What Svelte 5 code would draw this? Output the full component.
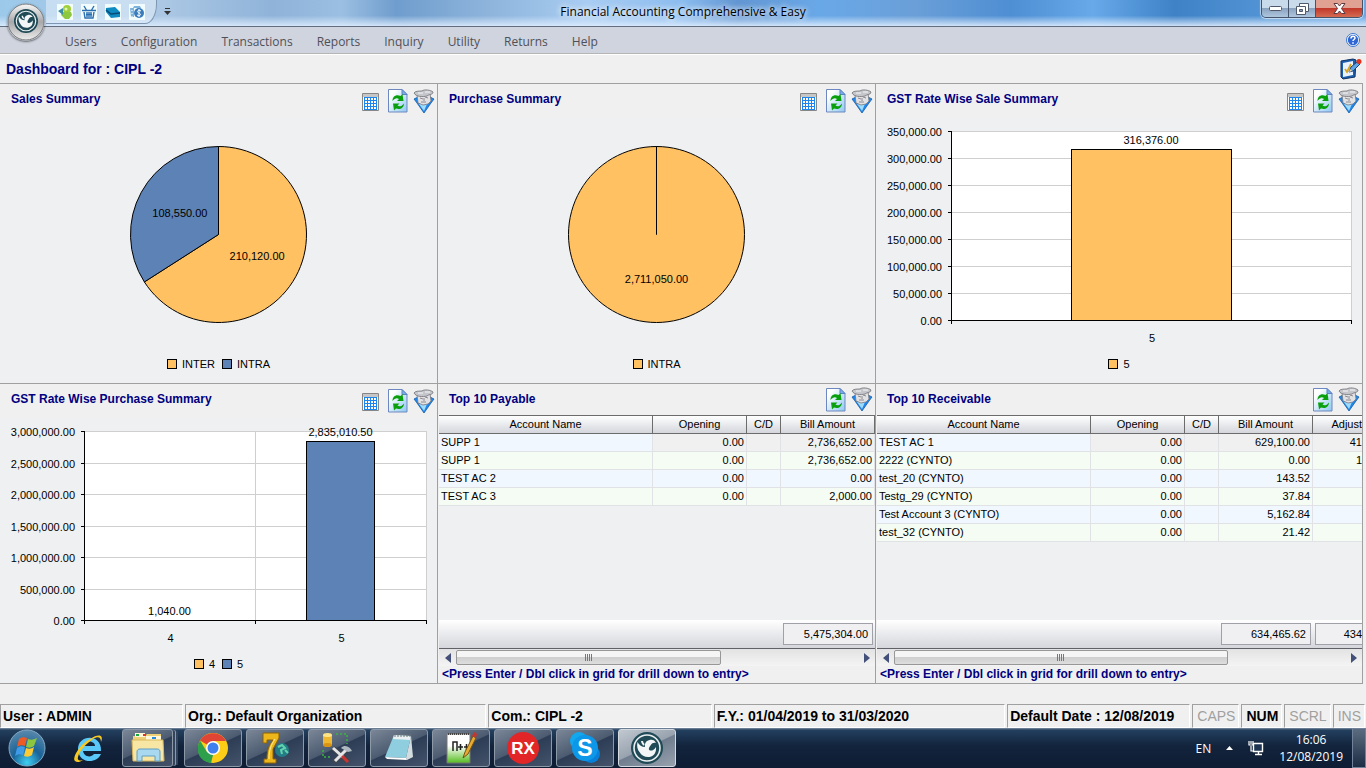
<script lang="ts">
  const menu = ['Users', 'Configuration', 'Transactions', 'Reports', 'Inquiry', 'Utility', 'Returns', 'Help'];
  const colors = ['#ffc161', '#5d82b6'];

  type Point = { name: string; value: number };
  type Bars = { title: string; width: number; left: number; max: number; step: number; data: Point[] };
  type Grid = { title: string; thumb: number; total: string; clipped?: string; rows: string[][] };

  const sales: Point[] = [{ name: 'INTER', value: 210120 }, { name: 'INTRA', value: 108550 }];
  const purchases: Point[] = [{ name: 'INTRA', value: 2711050 }];

  const saleRates: Bars = {
    title: 'GST Rate Wise Sale Summary',
    width: 486, left: 75, max: 350000, step: 50000,
    data: [{ name: '5', value: 316376 }]
  };
  const purchaseRates: Bars = {
    title: 'GST Rate Wise Purchase Summary',
    width: 437, left: 84, max: 3000000, step: 500000,
    data: [{ name: '4', value: 1040 }, { name: '5', value: 2835010.5 }]
  };

  const payable: Grid = {
    title: 'Top 10 Payable',
    thumb: 66,
    total: '5,475,304.00',
    rows: [
      ['SUPP 1', '0.00', '', '2,736,652.00'],
      ['SUPP 1', '0.00', '', '2,736,652.00'],
      ['TEST AC 2', '0.00', '', '0.00'],
      ['TEST AC 3', '0.00', '', '2,000.00']
    ]
  };
  const receivable: Grid = {
    title: 'Top 10 Receivable',
    thumb: 74,
    total: '634,465.62',
    clipped: '434',
    rows: [
      ['TEST AC 1', '0.00', '', '629,100.00', '41'],
      ['2222 (CYNTO)', '0.00', '', '0.00', '1'],
      ['test_20 (CYNTO)', '0.00', '', '143.52', ''],
      ['Testg_29 (CYNTO)', '0.00', '', '37.84', ''],
      ['Test Account 3 (CYNTO)', '0.00', '', '5,162.84', ''],
      ['test_32 (CYNTO)', '0.00', '', '21.42', '']
    ]
  };

  const status = [
    { text: 'User : ADMIN', grow: 182 },
    { text: 'Org.: Default Organization', grow: 302 },
    { text: 'Com.: CIPL -2', grow: 223 },
    { text: 'F.Y.: 01/04/2019 to 31/03/2020', grow: 292 },
    { text: 'Default Date : 12/08/2019', grow: 182 }
  ];
  const locks = [
    { text: 'CAPS', on: false },
    { text: 'NUM', on: true },
    { text: 'SCRL', on: false },
    { text: 'INS', on: false }
  ];

  const money = (n: number) =>
    n.toLocaleString('en-US', { minimumFractionDigits: 2, maximumFractionDigits: 2 });

  const top = 13;
  const bottom = 202;

  function slices(data: Point[]) {
    const sum = data.reduce((a, p) => a + p.value, 0);
    let from = 0;
    return data.map((p, i) => {
      const a = from * 2 * Math.PI;
      from += p.value / sum;
      const b = from * 2 * Math.PI;
      const mid = (a + b) / 2;
      const at = (r: number, t: number) => [218.5 + r * Math.sin(t), 116.5 - r * Math.cos(t)];
      const end = data.length === 1 ? b - 0.0001 : b;
      return {
        value: p.value,
        color: colors[i],
        d: `M218.5 116.5L${at(88, a)}A88 88 0 ${b - a > Math.PI ? 1 : 0} 1 ${at(88, end)}Z`,
        label: at(44, mid)
      };
    });
  }

  function ticks(c: Bars) {
    const out = [];
    for (let v = 0; v <= c.max; v += c.step) {
      out.push({ v, y: Math.round(bottom - (v / c.max) * (bottom - top)) + 0.5 });
    }
    return out;
  }
</script>

{#snippet swan()}
  <circle cx="20" cy="20" r="16" fill="#1f4a56" />
  <circle cx="20" cy="20" r="13" fill="none" stroke="#e9eff1" stroke-width="1.6" />
  <path d="M10.500 14c-1 4 0 8 2 10 2 4 6 5.500 10 5 5-1 7-5 6.500-10-2 3-4 4-6 3.500-2-1-1-3 .5-5 1.500-3 4-3 5.500-2.500-1-3-4-4-6.500-3-4 1-5 4-4.500 7-3 0-6-2-7.500-5z" fill="#f2f6f7" />
  <path d="M15 13c0 2 1 3 2 4" stroke="#f2f6f7" stroke-width="2" fill="none" />
{/snippet}

{#snippet gridIcon()}
  <button class="tool" aria-label="Show as grid">
    <svg width="18" height="20" viewBox="0 0 18 20">
      <path d="M.5 1.500h16v17H.5z" fill="#fff" stroke="#868686" />
      <path d="M1 2h15v3H1z" fill="#c6c6c6" />
      <path d="M2 5h13v13H2z" fill="#1c86ee" />
      {#each [6, 9, 12, 15] as y}
        {#each [3, 6, 9, 12] as x}
          <rect {x} {y} width="2" height="2" fill="#fff" />
        {/each}
      {/each}
    </svg>
  </button>
{/snippet}

{#snippet toolIcons()}
  <button class="tool" aria-label="Refresh">
    <svg width="20" height="24" viewBox="0 0 20 24">
      <defs>
        <linearGradient id="page" x1="0" y1="0" x2="1" y2="1">
          <stop offset="0.2" stop-color="#fff" />
          <stop offset="1" stop-color="#8dc8f2" />
        </linearGradient>
      </defs>
      <path d="M.5.5h13.500l5 5v17.500H.5z" fill="url(#page)" stroke="#6d88c0" />
      <path d="M14 .5v5h5z" fill="#78aee6" stroke="#5e83c4" />
      <path d="M4.500 12c0-5 4-7 8-5l2-2 1 7H9l2-2c-2-1.500-4-1-6.500 2z" fill="#0aa00d" />
      <path d="M16 14.500c0 4.500-4 6.500-8 5l-2 2-1-7h6.500l-2 2c2 1.500 4 1 6.500-2z" fill="#0aa00d" />
    </svg>
  </button>
  <button class="tool" aria-label="Filter">
    <svg width="22" height="25" viewBox="0 0 22 25">
      <path d="M1 10l4-2h12l4 2-3 4-7 10-7-10z" fill="#1e88ee" stroke="#1b5ca5" stroke-width=".8" />
      <path d="M6 15h8l-3 7z" fill="#9fdcff" />
      <path d="M4 6l13-2 1 8-3 3-5 1-5-2z" fill="#e2e2e5" stroke="#77777d" stroke-width=".8" />
      <path d="M1 4c1-2 5-2 8-2 2-2 9-1 11 1 0 3-4 2-6 4-4 1-11 1-13-3z" fill="#c4c6cb" stroke="#707076" stroke-width=".8" />
      <path d="M5 4l5 0M12 3l5 0" stroke="#f5f5f5" />
      <path d="M7 9l3 1M12 8l3 1M11 9v3M8 13h5" stroke="#8a8a90" fill="none" />
    </svg>
  </button>
{/snippet}

{#snippet heading(title: string, grid: boolean)}
  <header>
    <h2>{title}</h2>
    <div class="tools">
      {#if grid}{@render gridIcon()}{/if}
      {@render toolIcons()}
    </div>
  </header>
{/snippet}

{#snippet legend(names: string[])}
  <ul class="legend">
    {#each names as name, i}
      <li><i class="key" class:second={i === 1}></i>{name}</li>
    {/each}
  </ul>
{/snippet}

{#snippet pie(title: string, data: Point[])}
  <section class="panel">
    {@render heading(title, true)}
    <svg class="chart" viewBox="0 0 437 236" role="img" aria-label={title}>
      {#each slices(data) as s}
        <path d={s.d} fill={s.color} stroke="#000" />
      {/each}
      {#each slices(data) as s}
        <text x={s.label[0]} y={s.label[1] + 4} text-anchor="middle">{money(s.value)}</text>
      {/each}
    </svg>
    {@render legend(data.map((p) => p.name))}
  </section>
{/snippet}

{#snippet bars(c: Bars)}
  {@const right = c.width - 11}
  {@const slot = (right - c.left) / c.data.length}
  <section class="panel">
    {@render heading(c.title, true)}
    <svg class="chart" viewBox="0 0 {c.width} 236" role="img" aria-label={c.title}>
      <rect x={c.left} y={top} width={right - c.left} height={bottom - top} fill="#fff" />
      {#each ticks(c) as t}
        <path d="M{c.left} {t.y}H{right}" stroke="#cfcfcf" />
        <path d="M{c.left - 3} {t.y}h4" stroke="#000" />
        <text x={c.left - 9} y={t.y + 4} text-anchor="end">{money(t.v)}</text>
      {/each}
      {#each c.data as p, i}
        {@const x = Math.round(c.left + slot * i)}
        {@const end = Math.round(x + slot) + 0.5}
        {@const h = Math.round((p.value / c.max) * (bottom - top))}
        <path d="M{end} {top}V{bottom}" stroke="#cfcfcf" />
        <path d="M{end} {bottom}v4" stroke="#000" />
        {#if h > 0}
          <rect x={Math.round(x + slot * 0.3) + 0.5} y={bottom - h + 0.5} width={Math.round(slot * 0.4)} height={h} fill={colors[i]} stroke="#000" />
        {/if}
        <text x={x + slot / 2} y={bottom - h - 5} text-anchor="middle">{money(p.value)}</text>
        <text x={x + slot / 2 + 1} y="224" text-anchor="middle">{p.name}</text>
      {/each}
      <path d="M{c.left + 0.5} {top}V{bottom + 4}M{c.left} {bottom + 0.5}H{right + 1}" stroke="#000" />
    </svg>
    {@render legend(c.data.map((p) => p.name))}
  </section>
{/snippet}

{#snippet list(g: Grid)}
  <section class="panel list">
    {@render heading(g.title, false)}
    <div class="rows">
      <table>
        <colgroup>
          <col class="name" /><col class="opening" /><col class="cd" /><col class="amount" />
          {#if g.clipped}<col />{/if}
        </colgroup>
        <thead>
          <tr>
            <th>Account Name</th><th>Opening</th><th>C/D</th><th>Bill Amount</th>
            {#if g.clipped}<th class="cut">Adjust</th>{/if}
          </tr>
        </thead>
        <tbody>
          {#each g.rows as row}
            <tr>{#each row as cell}<td>{cell}</td>{/each}</tr>
          {/each}
        </tbody>
      </table>
    </div>
    <div class="totals">
      <output>{g.total}</output>
      {#if g.clipped}<output class="cut">{g.clipped}</output>{/if}
    </div>
    <div class="scroll">
      <button aria-label="Scroll left"><svg width="6" height="10" viewBox="0 0 6 10"><path d="M6 0v10L0 5z" fill="#43507a" /></svg></button>
      <div class="track"><div class="thumb" style="width: {g.thumb}%"></div></div>
      <button aria-label="Scroll right"><svg width="6" height="10" viewBox="0 0 6 10"><path d="M0 0v10l6-5z" fill="#43507a" /></svg></button>
    </div>
    <p class="hint">&lt;Press Enter / Dbl click in grid for drill down to entry&gt;</p>
  </section>
{/snippet}

<div class="window">
  <div class="titlebar">
    <div class="quick">
      <button aria-label="Party"><svg width="16" height="16"><rect width="16" height="16" fill="#f2fcfd" /><circle cx="10" cy="5" r="4" fill="#9fcf3a" /><path d="M5 8h9l1 3-3 4H8l-4-4z" fill="#8dc63f" /><path d="M1 7l5-3v7z" fill="#3b8fa0" /><circle cx="9" cy="5" r="1.500" fill="#e5f5b5" /></svg></button>
      <button aria-label="Basket"><svg width="16" height="16"><rect width="16" height="16" fill="#f2fcfd" /><path d="M1 6.500h14M3 8l1 6h8l1-6M3 2l3 5M13 2l-3 5M5 10.500h6M6 8v5M8 8v5M10 8v5" stroke="#2b6fb0" stroke-width="1.400" fill="none" /></svg></button>
      <button aria-label="Card"><svg width="16" height="16"><rect width="16" height="16" fill="#f2fcfd" /><path d="M1 4l9-1 5 5v5l-9 1-5-6z" fill="#0d8abf" /><path d="M1 6l5 4 9-1" stroke="#0a4a78" stroke-width="1.500" fill="none" /></svg></button>
      <button aria-label="Cash"><svg width="16" height="16"><rect width="16" height="16" fill="#f2fcfd" /><path d="M5 2h6l1 2H4zM1 4h4v9H2z" fill="#7fb3dc" /><path d="M3 6v1M3 9v1M3 12v1" stroke="#fff" /><circle cx="10" cy="9" r="5" fill="#3a7dbb" /><path d="M12 7c-3-2-5 1-2 2s1 4-2 2M10 5v8" stroke="#fff" fill="none" /></svg></button>
    </div>
    <button class="more" aria-label="Customize toolbar"><svg width="7" height="7"><path d="M1 .5h5" stroke="#333" /><path d="M0 3h7L3.500 7z" fill="#333" /></svg></button>
    <h1>Financial Accounting Comprehensive &amp; Easy</h1>
    <div class="controls">
      <button aria-label="Minimize"><svg width="13" height="6"><rect x=".5" y=".5" width="12" height="4" rx="1" fill="#fff" stroke="#50596b" /></svg></button>
      <button aria-label="Restore"><svg width="13" height="12"><path d="M3.500.5h9v8h-3v3h-9v-8h3z" fill="#fff" stroke="#50596b" /><path d="M3.500 3.500h6v5" fill="none" stroke="#50596b" /><path d="M3.500 6.500h3v2h-3z" fill="#8d9cb5" stroke="#50596b" /></svg></button>
      <button class="close" aria-label="Close"><svg width="13" height="11"><path d="M1 .5h3.500l2 2.500 2-2.500H12L8.500 5.500l3.500 5H8.500l-2-2.500-2 2.500H1l3.500-5z" fill="#fff" stroke="#5b3a40" /></svg></button>
    </div>
  </div>

  <button class="orb" aria-label="Application menu">
    <svg width="38" height="38" viewBox="0 0 38 38">
      <defs>
        <linearGradient id="metal" x1="0" y1="0" x2="0" y2="1">
          <stop offset="0" stop-color="#f8f8f8" /><stop offset=".5" stop-color="#a8a8aa" /><stop offset="1" stop-color="#ececec" />
        </linearGradient>
      </defs>
      <circle cx="19" cy="19" r="18" fill="url(#metal)" stroke="#77797d" />
      <g transform="translate(4 3) scale(.75)">{@render swan()}</g>
    </svg>
  </button>

  <nav class="menu">
    {#each menu as item}
      <a href="#{item.toLowerCase()}">{item}</a>
    {/each}
    <button class="help" aria-label="Help">
      <svg width="14" height="14" viewBox="0 0 14 14"><circle cx="7" cy="7" r="6.500" fill="#fff" stroke="#3b74cf" /><circle cx="7" cy="7" r="5.200" fill="#2e66d4" /><path d="M5 5.500c0-3 4-3 4-.5 0 1.500-2 1.500-2 3M7 9.300v1.500" stroke="#fff" stroke-width="1.500" fill="none" /></svg>
    </button>
  </nav>

  <div class="caption">
    <strong>Dashboard for : CIPL -2</strong>
    <button class="tool" aria-label="Edit dashboard">
      <svg width="22" height="22" viewBox="0 0 22 22">
        <path d="M1 3l12-2 3 1-1 17-12 2-2-2z" fill="#1d5fae" stroke="#0d3260" />
        <path d="M3 5l10-2v14L3 19z" fill="#e9f3ff" />
        <path d="M5 11l2 3 4-8" stroke="#d9a520" stroke-width="1.800" fill="none" />
        <path d="M9 14l2-5 6-5 3 2-7 7z" fill="#5fa4e4" stroke="#1b4377" />
        <path d="M9 14l1-3 2 2z" fill="#efd5a2" />
        <circle cx="19" cy="3.500" r="2.500" fill="#e03320" />
      </svg>
    </button>
  </div>

  <main>
    {@render pie('Sales Summary', sales)}
    {@render pie('Purchase Summary', purchases)}
    {@render bars(saleRates)}
    {@render bars(purchaseRates)}
    {@render list(payable)}
    {@render list(receivable)}
  </main>

  <footer class="status">
    {#each status as s}
      <span class="cell" style="flex-grow: {s.grow}">{s.text}</span>
    {/each}
    {#each locks as l}
      <span class="cell lock" class:on={l.on}>{l.text}</span>
    {/each}
  </footer>

  <div class="taskbar">
    <button class="start" aria-label="Start">
      <svg width="38" height="38" viewBox="0 0 38 38">
        <defs>
          <radialGradient id="orb" cx=".5" cy=".9" r=".9">
            <stop offset="0" stop-color="#3fd0f4" /><stop offset=".45" stop-color="#1a6398" /><stop offset="1" stop-color="#5b89ab" />
          </radialGradient>
        </defs>
        <circle cx="19" cy="19" r="18" fill="url(#orb)" stroke="#82aac6" />
        <path d="M11 10c3-2 5-2 8-1l-2 8c-3-1-5-1-8 1z" fill="#ee5a24" />
        <path d="M20 10c3 1 5 1 9-1l-3 8c-3 2-5 2-8 1z" fill="#8cc63e" />
        <path d="M9 19c3-2 5-2 8-1l-2 8c-3-1-5-1-8 1z" fill="#3f9be8" />
        <path d="M18 19c3 1 5 1 8-1l-2 8c-3 2-5 2-8 1z" fill="#fccb33" />
      </svg>
    </button>
    <button class="ie" aria-label="Internet Explorer">
      <svg width="32" height="32" viewBox="0 0 32 32">
        <path d="M29 19H11c1 6 8 7 11 3h7c-4 10-22 10-23-4C5 2 30 1 29 19zM11 14h12c0-6-11-6-12 0z" fill="#5ac8f8" />
        <path d="M29 10c3-7-2-9-11-3C7 13 0 26 3 29c2 2 5 1 8-1-4 1-6 0-5-3 1-6 9-14 15-18 5-3 8-2 8 3z" fill="#f9c922" />
      </svg>
    </button>
    <button class="app stack" aria-label="Explorer">
      <svg width="34" height="32" viewBox="0 0 34 32">
        <path d="M2 4h12l2-2h14v26H2z" fill="#edcf76" />
        <path d="M4 1h10v4H4zM15 4h15v4H15z" fill="#fff7d9" />
        <path d="M5 2h3v2H5z" fill="#1ca83b" /><path d="M12 2h3v2h-3z" fill="#df3528" /><path d="M21 5h4v2h-4z" fill="#258de0" />
        <path d="M1 8h31l1 21H2z" fill="#f8e6a4" stroke="#d9b75c" />
        <path d="M6 29V20c0-2 1-3 3-3h17c2 0 3 1 3 3v9h-5v-5H11v5z" fill="#a9d9f1" stroke="#5f9ec4" />
      </svg>
    </button>
    <button class="app" aria-label="Chrome">
      <svg width="30" height="30" viewBox="0 0 30 30">
        <circle cx="15" cy="15" r="15" fill="#fccd17" />
        <path d="M15 15L2 7.500C8-2.500 23-2 28 8H15z" fill="#e04434" />
        <path d="M2 7.500L9 19l6 3-2 8C0 28-3 16 2 7.500z" fill="#2ea04c" />
        <circle cx="15" cy="15" r="7" fill="#fff" /><circle cx="15" cy="15" r="5.500" fill="#3f7fee" />
      </svg>
    </button>
    <button class="app" aria-label="Seven">
      <svg width="30" height="32" viewBox="0 0 30 32">
        <circle cx="22" cy="18" r="7" fill="#237c86" /><path d="M18 15l4-2 3 3-4 2 1 4M25 18l3 3" stroke="#62d3ad" stroke-width="2" fill="none" />
        <path d="M3 1h16v5l-6 11v10h3v4H4v-4h3c0-9 2-14 6-19H7v3H3z" fill="#edb71c" stroke="#8b6206" />
        <path d="M9 27c0-9 2-14 6-20" stroke="#fff0a0" fill="none" />
      </svg>
    </button>
    <button class="app" aria-label="Database tools">
      <svg width="32" height="32" viewBox="0 0 32 32">
        <path d="M15 2h11v10M2 18v7h8" stroke="#38b53b" stroke-width="1.500" stroke-dasharray="2" fill="none" />
        <path d="M2 3h9v10H2z" fill="#f0b730" /><ellipse cx="6.500" cy="3" rx="4.500" ry="2" fill="#ffe488" /><ellipse cx="6.500" cy="13" rx="4.500" ry="2" fill="#d99315" />
        <path d="M12 16l15 14M27 16L13 30" stroke="#45464a" stroke-width="5" />
        <path d="M12 16l10 9M27 16L14 29" stroke="#e3e7ea" stroke-width="3" /><path d="M21 24l6 6" stroke="#c33" stroke-width="3" />
        <path d="M20 16c4-4 9-1 11 3l-4 1z" fill="#aeb8c0" />
      </svg>
    </button>
    <button class="app" aria-label="Notepad">
      <svg width="32" height="32" viewBox="0 0 32 32">
        <path d="M11 3l17 1-5 22-21-1z" fill="#8fcede" /><path d="M11 3l17 1-1 4-17-1z" fill="#e8f0f2" />
        <path d="M28 4l2 21-6 3-1-2z" fill="#d3dde0" /><path d="M2 25l21 1 1 2-20-1z" fill="#fff" />
        <path d="M12 2v3M15 2v3M18 2v3M21 2v3M24 2v3M27 2v3" stroke="#6f7778" />
      </svg>
    </button>
    <button class="app" aria-label="Notepad++">
      <svg width="32" height="32" viewBox="0 0 32 32">
        <defs>
          <linearGradient id="note" x1="0" y1="0" x2="0" y2="1"><stop offset=".4" stop-color="#fff" /><stop offset="1" stop-color="#56bd20" /></linearGradient>
        </defs>
        <path d="M2 2h23v29H2z" fill="url(#note)" stroke="#777" /><path d="M3 2h22" stroke="#444" stroke-width="2" stroke-dasharray="1" />
        <path d="M8 19v-9h4v9M13 15h5M15.500 12v6M19 15h5M21.500 12v6" stroke="#222" stroke-width="1.500" fill="none" />
        <path d="M18 26l2-6 8-16 3 2-8 16z" fill="#e7ac2f" stroke="#765116" /><path d="M27 4l2-4 3 2-1 4z" fill="#c2372f" />
      </svg>
    </button>
    <button class="app" aria-label="RX">
      <svg width="32" height="32" viewBox="0 0 32 32"><circle cx="16" cy="16" r="16" fill="#e22628" /><text class="rx" x="16" y="22" text-anchor="middle">RX</text></svg>
    </button>
    <button class="app" aria-label="Skype">
      <svg width="32" height="32" viewBox="0 0 32 32"><circle cx="10" cy="9" r="9" fill="#12a8ee" /><circle cx="22" cy="22" r="9" fill="#087fd8" /><circle cx="16" cy="16" r="13" fill="#0c97e8" /><text class="skype" x="16" y="24" text-anchor="middle">S</text></svg>
    </button>
    <button class="app active" aria-label="Accounting">
      <svg width="36" height="36" viewBox="2 2 36 36">{@render swan()}</svg>
    </button>
    <div class="tray">
      <span>EN</span>
      <svg width="7" height="4"><path d="M0 4h7L3.500 0z" fill="#fff" /></svg>
      <svg width="16" height="16" viewBox="0 0 16 16"><path d="M5.500 3.500h9v8h-9zM7 14.500h7M10.500 12v2" stroke="#fff" stroke-width="1.400" fill="#1d3550" /><path d="M1 1v4h4V1M3 1v3M3 6v5h2" stroke="#fff" stroke-width="1.200" fill="none" /></svg>
      <time><span>16:06</span><span>12/08/2019</span></time>
    </div>
    <button class="peek" aria-label="Show desktop"></button>
  </div>
</div>

<style>
  :global(body) {
    margin: 0;
    background: #f0f0f0;
  }

  .window {
    position: relative;
    display: flex;
    flex-direction: column;
    min-height: 100vh;
    background: #f0f0f0;
    font-family: 'Liberation Sans', sans-serif;
    font-size: 11px;
    color: #000;
  }

  button {
    display: flex;
    align-items: center;
    justify-content: center;
    padding: 0;
    border: 0;
    background: none;
  }

  svg {
    display: block;
  }

  .titlebar {
    display: flex;
    align-items: flex-start;
    height: 27px;
    box-sizing: border-box;
    border-bottom: 1px solid #626d80;
    background:
      linear-gradient(to bottom, transparent 60%, rgba(220, 235, 252, 0.9)),
      linear-gradient(to right, #9cc9ea 0, #abc7e4 12%, #8fb3d9 20%, #9bbfe2 25%, #6f9dcd 29%, #8fb5dc 36%, #a9cdf2 43%, #8bbcef 50%, #6296d2 54%, #69a8e8 60%, #6a9fd8 67%, #4e8ed3 74%, #67a9e9 80%, #3f82c6 86%, #66a7e4 100%);
  }

  .quick {
    display: flex;
    align-items: center;
    gap: 8px;
    height: 23px;
    margin-left: 46px;
    padding: 0 11px;
    border: 1px solid #7f96b2;
    border-top: 0;
    border-left: 0;
    border-radius: 0 0 12px 0 / 0 0 20px 0;
    background: rgba(225, 236, 248, 0.6);
  }

  .more {
    margin: 8px 0 0 7px;
  }

  h1 {
    flex: 1;
    margin: 0;
    padding-right: 66px;
    font: 12px/24px 'Open Sans', sans-serif;
    text-align: center;
    text-shadow: 0 0 6px #fff, 0 0 6px #fff;
  }

  .controls {
    display: flex;
    height: 17px;
    margin-right: 3px;
    border: 1px solid #45546b;
    border-top: 0;
    border-radius: 0 0 5px 5px;
    overflow: hidden;
    box-shadow: 0 0 1px 1px rgba(255, 255, 255, 0.6);
  }

  .controls button {
    width: 27px;
    border-right: 1px solid #45546b;
    background: linear-gradient(#c9daea 50%, #8ba3bf 50%, #aec6dd);
  }

  .controls .close {
    width: 46px;
    border-right: 0;
    background: linear-gradient(#e0a092 50%, #c2382a 50%, #d46b52);
  }

  .orb {
    position: absolute;
    left: 7px;
    top: 3px;
    border-radius: 50%;
    box-shadow: 0 1px 2px rgba(0, 0, 0, 0.5);
  }

  .menu {
    display: flex;
    align-items: center;
    gap: 24px;
    height: 26px;
    padding: 0 6px 0 65px;
    border-bottom: 1px solid #b5b5b5;
    background: #cfd4de;
    font: 12px/22px 'Open Sans', sans-serif;
  }

  .menu a {
    padding-top: 4px;
    color: #4f5057;
    text-decoration: none;
  }

  .help {
    margin-left: auto;
  }

  .caption {
    display: flex;
    align-items: center;
    justify-content: space-between;
    height: 28px;
    padding: 0 4px 0 6px;
    border-top: 1px solid #fff;
    color: #000080;
    font-size: 14px;
  }

  main {
    display: grid;
    grid-template-columns: 438fr 438fr 487fr;
    grid-auto-rows: minmax(300px, auto);
    margin-right: 3px;
    border-top: 1px solid #a0a0a0;
  }

  .panel {
    display: flex;
    flex-direction: column;
    box-sizing: border-box;
    min-width: 0;
    border-right: 1px solid #a0a0a0;
    border-bottom: 1px solid #a0a0a0;
    background: #eff0f2;
  }

  header {
    display: flex;
    justify-content: space-between;
    height: 34px;
    padding: 0 2px 0 11px;
    background: #f0f0f0;
  }

  h2 {
    margin: 0;
    color: #000080;
    font-size: 12px;
    line-height: 31px;
  }

  .tools {
    display: flex;
    align-items: center;
    gap: 5px;
  }

  .tools .tool:nth-last-child(3) {
    margin: 2px 3px 0 0;
  }

  .chart {
    width: 100%;
    height: 236px;
  }

  .legend {
    display: flex;
    justify-content: center;
    gap: 7px;
    margin: 0;
    padding: 0;
    list-style: none;
    line-height: 20px;
  }

  .legend li {
    display: flex;
    align-items: center;
    gap: 5px;
  }

  .key {
    width: 8px;
    height: 8px;
    border: 1px solid #000;
    background: #ffc161;
  }

  .key.second {
    background: #5d82b6;
  }

  .list {
    padding-left: 1px;
    background: #f0f0f0;
  }

  .list header {
    height: 31px;
    padding-left: 10px;
  }

  .rows {
    flex: 1;
    overflow: hidden;
    background: #eff0f2;
  }

  table {
    width: 100%;
    table-layout: fixed;
    border-collapse: separate;
    border-spacing: 0;
  }

  .name {
    width: 214px;
  }

  .opening {
    width: 94px;
  }

  .cd {
    width: 34px;
  }

  .amount {
    width: 94px;
  }

  th,
  td {
    box-sizing: border-box;
    height: 18px;
    padding: 0 2px;
    overflow: hidden;
    line-height: 17px;
    white-space: nowrap;
  }

  th {
    height: 19px;
    border: 1px solid #6c6c6c;
    border-left: 0;
    background: linear-gradient(#fff, #d4d6dc);
    font-weight: normal;
  }

  td {
    border-right: 1px solid #e0e2e6;
    border-bottom: 1px solid #e0e2e6;
    background: #f0f7ff;
    text-align: right;
  }

  td:first-child {
    text-align: left;
  }

  tr:nth-child(even) td {
    background: #f4fcf4;
  }

  tr:first-child td:not(:first-child) {
    background: #f0f0f0;
  }

  th.cut {
    padding: 0;
    border-right: 0;
    text-align: right;
  }

  td:nth-child(5) {
    padding: 0;
    border-right: 0;
  }

  .totals {
    display: flex;
    justify-content: flex-end;
    height: 22px;
    padding: 3px 2px 3px 0;
    border-bottom: 1px solid #606068;
    background: linear-gradient(#fff, #d4d6dc);
  }

  output {
    width: 84px;
    padding-right: 4px;
    border: 1px solid #a0a0a8;
    background: #f0f0f2;
    line-height: 21px;
    text-align: right;
  }

  output.cut {
    width: 46px;
    margin: 0 -2px 0 4px;
    padding: 0;
    border-right: 0;
  }

  .scroll {
    display: flex;
    height: 17px;
    background: linear-gradient(#e3e3e3, #f4f4f4);
  }

  .scroll button {
    width: 17px;
  }

  .track {
    flex: 1;
    padding: 1px 0;
  }

  .thumb {
    box-sizing: border-box;
    height: 15px;
    border: 1px solid #979797;
    border-radius: 2px;
    background:
      repeating-linear-gradient(to right, #777 0 1px, transparent 1px 2px) center / 8px 7px no-repeat,
      linear-gradient(#f5f5f5 50%, #cfcfcf 50%, #dedede);
  }

  .hint {
    margin: 0;
    padding-left: 3px;
    color: #000080;
    font-size: 12px;
    font-weight: bold;
    line-height: 17px;
    white-space: nowrap;
    overflow: hidden;
  }

  .status {
    display: flex;
    gap: 2px;
    margin-top: auto;
    padding-right: 1px;
    font-size: 14px;
    line-height: 22px;
  }

  .cell {
    flex: 1 1 0;
    box-sizing: border-box;
    height: 24px;
    padding-left: 2px;
    border: 1px solid #fff;
    border-top-color: #a0a0a0;
    border-left-color: #a0a0a0;
    font-weight: bold;
    overflow: hidden;
    white-space: nowrap;
  }

  .lock {
    flex: none;
    padding: 0 3px 0 4px;
    color: #a0a0a0;
    font-weight: normal;
  }

  .lock.on {
    color: #000;
    font-weight: bold;
  }

  .taskbar {
    display: flex;
    height: 40px;
    background: linear-gradient(#8193a8 0, #23405f 2px, #12233c 45%, #0e1d33 100%);
  }

  .start {
    width: 54px;
  }

  .ie {
    width: 68px;
  }

  .app {
    box-sizing: border-box;
    width: 58px;
    height: 38px;
    margin: 1px 4px 0 0;
    border: 1px solid #8e99a8;
    border-radius: 3px;
    background: linear-gradient(155deg, #7b8798 0, #4c5b70 48%, #2c3d55 50%, #44536a 100%);
  }

  .stack {
    width: 51px;
    margin-right: 11px;
    box-shadow: 3px 0 0 -1px #33455d, 4px 0 0 -1px #8e99a8, 7px 0 0 -2px #33455d;
  }

  .active {
    border-color: #d5dae0;
    background: linear-gradient(155deg, #c1c8d0 0, #98a3af 48%, #6f7d8e 50%, #98a2af 100%);
  }

  .rx,
  .skype {
    fill: #fff;
    font-size: 17px;
    font-weight: bold;
  }

  .skype {
    font-size: 23px;
  }

  .tray {
    display: flex;
    align-items: center;
    gap: 15px;
    margin-left: auto;
    padding-right: 9px;
    color: #fff;
    font: 12px/17px 'Open Sans', sans-serif;
  }

  time {
    display: flex;
    flex-direction: column;
    align-items: center;
  }

  .peek {
    width: 14px;
    height: 40px;
    border: 1px solid #71829a;
    background: linear-gradient(#5c6c80, #1c2d44);
  }
</style>
